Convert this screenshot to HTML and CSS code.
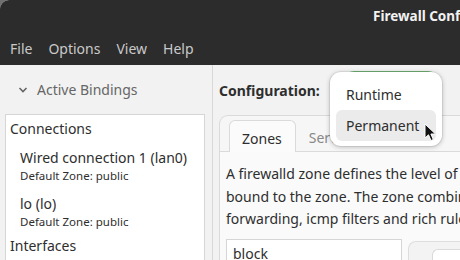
FILE: index.html
```html
<!DOCTYPE html>
<html lang="en">

<head>
    <meta charset="UTF-8">
    <title>Firewall Configuration</title>
    <link rel="stylesheet" href="styles.css">
</head>

<body>
    <div class="window">
        <div class="titlebar">Firewall Configuration</div>

        <div class="menubar">
            <span>File</span>
            <span>Options</span>
            <span>View</span>
            <span>Help</span>
        </div>

        <div class="main">
            <div class="sidebar">
                <div class="expander">
                    <svg width="10" height="10" viewBox="0 0 10 10">
                        <path d="M1.5 3 L5 6.5 L8.5 3" fill="none" stroke="#666" stroke-width="1.6" />
                    </svg>
                    <span>Active Bindings</span>
                </div>
                <div class="bindings">
                    <div class="group">Connections</div>
                    <div class="item">
                        <div class="name">Wired connection 1 (lan0)</div>
                        <div class="zone">Default Zone: public</div>
                    </div>
                    <div class="item">
                        <div class="name">lo (lo)</div>
                        <div class="zone">Default Zone: public</div>
                    </div>
                    <div class="group">Interfaces</div>
                </div>
            </div>

            <div class="content">
                <div class="config-row">
                    <span class="config-label">Configuration:</span>
                    <div class="combo"></div>
                </div>

                <div class="notebook">
                    <div class="tabs">
                        <div class="tab active">Zones</div>
                        <div class="tab">Services</div>
                    </div>
                    <div class="page">
                        <p class="desc">A firewalld zone defines the level of trust for network connections, interfaces and source addresses<br>bound to the zone. The zone combines services, ports, protocols, masquerading, port/packet<br>forwarding, icmp filters and rich rules.</p>
                        <div class="zone-row">
                            <div class="zone-list">block</div>
                            <div class="zone-side">
                                <div class="arrow-btn">
                                    <svg width="6" height="6" viewBox="0 0 6 6">
                                        <path d="M6 0 L6 6 L0 6 Z" fill="#aaa" />
                                    </svg>
                                </div>
                                <div class="inner-box"></div>
                            </div>
                        </div>
                    </div>
                </div>

                <div class="popup">
                    <div class="popup-item">Runtime</div>
                    <div class="popup-item selected">Permanent</div>
                </div>

                <svg class="cursor" width="14" height="20" viewBox="0 0 14 20">
                    <path d="M1 1 L1 15 L4.5 11.8 L7 17.5 L9.3 16.5 L6.9 11 L11.5 11 Z" fill="#111" stroke="#fff" stroke-width="1" stroke-linejoin="round" />
                </svg>
            </div>
        </div>
    </div>
</body>

</html>
```

FILE: styles.css
```css
body {
    margin: 0;
    background-color: #707070;
    font-family: "Noto Sans", sans-serif;
    font-size: 14px;
    color: #2e2e2e;
    overflow: hidden;
}

.window {
    width: 460px;
    height: 260px;
    border-radius: 9px 0 0 0;
    overflow: hidden;
    background-color: #f2f2f2;
    display: flex;
    flex-direction: column;
}

.titlebar {
    height: 33px;
    flex: none;
    background-color: #2c2c2c;
    color: #f2f2f2;
    font-weight: bold;
    font-size: 13.5px;
    line-height: 33px;
    padding-left: 373px;
    white-space: nowrap;
}

.menubar {
    height: 32px;
    flex: none;
    background-color: #2c2c2c;
    color: #c9c9c9;
    display: flex;
    align-items: center;
    padding-left: 10px;
    gap: 16px;
    line-height: 32px;
}

.main {
    flex: 1;
    display: flex;
    min-height: 0;
}

.sidebar {
    width: 212px;
    flex: none;
    border-right: 1px solid #d8d8d8;
}

.expander {
    height: 49px;
    display: flex;
    align-items: center;
    padding-left: 18px;
    gap: 9px;
    color: #666;
}

.bindings {
    margin: 0 7px 0 5px;
    height: 200px;
    background-color: #fff;
    border: 1px solid #d6d6d6;
    padding: 2px 0 0 4px;
}

.group {
    line-height: 24px;
}

.item {
    padding-left: 10px;
    margin-top: 5px;
}

.item + .item {
    margin-top: 9px;
}

.item + .group {
    margin-top: 5px;
}

.item .name {
    line-height: 23px;
}

.item .zone {
    font-size: 11.5px;
    line-height: 14px;
}

.content {
    flex: 1;
    position: relative;
    padding-left: 6px;
}

.config-row {
    height: 50px;
    display: flex;
    align-items: center;
}

.config-label {
    font-weight: bold;
}

.combo {
    align-self: flex-start;
    margin: 6px 0 0 24px;
    width: 92px;
    height: 36px;
    border: 1px solid #73b475;
    border-radius: 10px;
    background-color: #fff;
}

.notebook {
    border: 1px solid #dadada;
    border-right: none;
    border-bottom: none;
    border-radius: 9px 0 0 0;
    background-color: #f6f6f6;
}

.tabs {
    display: flex;
    padding: 4px 0 0 9px;
    border-bottom: 1px solid #dadada;
    height: 36px;
    box-sizing: border-box;
}

.tab {
    padding: 0 13px 0 12px;
    line-height: 35px;
    color: #888;
    margin-right: 1px;
}

.tab.active {
    color: #2e2e2e;
    background-color: #fbfbfb;
    border: 1px solid #dadada;
    border-bottom: none;
    border-radius: 6px 6px 0 0;
    margin-bottom: -1px;
}

.page {
    background-color: #fafafa;
    padding: 11px 0 0 6px;
}

.desc {
    margin: 0;
    line-height: 22.5px;
    white-space: nowrap;
}

.zone-row {
    display: flex;
    gap: 6px;
    margin-top: 8px;
}

.zone-list {
    width: 168px;
    height: 40px;
    background-color: #fff;
    border: 1px solid #d6d6d6;
    padding: 4px 0 0 6px;
}

.zone-side {
    flex: 1;
    display: flex;
    gap: 6px;
    margin-top: 2px;
    height: 40px;
    border: 1px solid #dedede;
    border-right: none;
    border-radius: 8px 0 0 0;
    padding: 7px 0 0 7px;
    background-color: #f3f3f3;
}

.arrow-btn {
    width: 10px;
    padding-top: 8px;
}

.inner-box {
    flex: 1;
    border: 1px solid #dadada;
    border-right: none;
    border-radius: 6px 0 0 0;
    background-color: #fff;
}

.popup {
    position: absolute;
    left: 117px;
    top: 7px;
    width: 112px;
    padding: 7px 6px 5px;
    box-sizing: border-box;
    background-color: #fff;
    border-radius: 11px;
    box-shadow: 0 1px 5px rgba(0, 0, 0, 0.25), 0 0 0 1px rgba(0, 0, 0, 0.06);
}

.popup-item {
    height: 31px;
    line-height: 31px;
    padding-left: 10px;
    border-radius: 6px;
}

.popup-item.selected {
    background-color: #ebebeb;
}

.cursor {
    position: absolute;
    left: 211px;
    top: 58px;
}
```
